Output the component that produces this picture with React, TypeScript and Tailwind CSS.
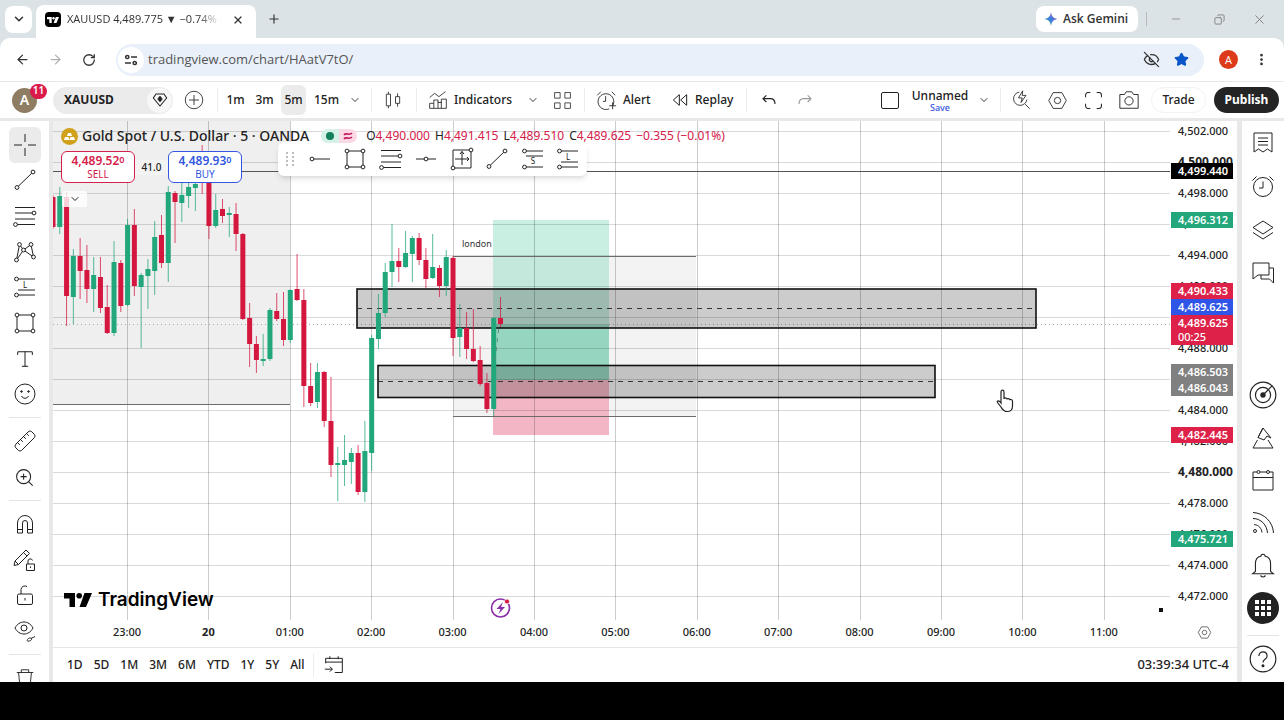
import React, { useState } from 'react';
import {
  ArrowLeft, ArrowRight, ChevronDown, Copy, EyeOff, Minus, MoreVertical, Plus, RotateCw, Ruler, Star, Type, X, ZoomIn,
} from 'lucide-react';

const UP = '#22a67b';
const DOWN = '#d4173f';

// [open, close, high, low] as plot y values, one entry for each 5 minute bar
const candles: number[][] = [
  [197, 227, 195, 229], [227, 196, 187, 234], [197, 296, 192, 326], [297, 256, 249, 324], [256, 271, 238, 299],
  [270, 289, 245, 303], [289, 275, 257, 312], [277, 308, 257, 313], [307, 333, 285, 334], [333, 262, 241, 336],
  [263, 306, 260, 312], [305, 225, 219, 306], [225, 286, 209, 296], [287, 275, 273, 348], [276, 269, 259, 309],
  [271, 237, 221, 295], [235, 263, 215, 268], [263, 192, 186, 282], [193, 202, 191, 243], [203, 195, 183, 222],
  [196, 187, 183, 208], [188, 184, 178, 211], [160, 180, 145, 194], [180, 226, 176, 239], [226, 210, 194, 228],
  [209, 216, 199, 223], [215, 213, 207, 237], [214, 234, 203, 251], [234, 319, 233, 320], [318, 344, 303, 367],
  [344, 360, 336, 373], [361, 359, 334, 366], [359, 310, 308, 361], [311, 319, 293, 321], [319, 340, 292, 346],
  [340, 290, 289, 343], [289, 300, 254, 301], [300, 386, 289, 407], [386, 403, 363, 406], [402, 372, 363, 408],
  [372, 421, 371, 427], [421, 465, 377, 477], [465, 463, 447, 501], [465, 460, 435, 486], [462, 453, 448, 484],
  [453, 492, 445, 495], [492, 451, 421, 502], [453, 338, 335, 471], [339, 313, 294, 349], [313, 272, 263, 317],
  [272, 261, 224, 287], [261, 267, 248, 282], [267, 253, 231, 268], [254, 238, 236, 282], [238, 260, 233, 265],
  [260, 279, 248, 288], [278, 267, 234, 279], [268, 286, 265, 297], [286, 257, 250, 296], [258, 338, 256, 356],
  [337, 328, 304, 357], [328, 349, 312, 359], [349, 361, 309, 362], [360, 384, 346, 386], [383, 409, 373, 413],
  [409, 318, 317, 416], [318, 324, 297, 327],
];

const hours = ['23:00', '20', '01:00', '02:00', '03:00', '04:00', '05:00', '06:00', '07:00', '08:00', '09:00', '10:00', '11:00'];
const prices = Array.from({ length: 16 }, (_, i) => 4502 - i * 2);

const tags = [
  { text: '4,499.440', y: 171, tone: 'bg-black' },
  { text: '4,496.312', y: 220, tone: 'bg-[#22a67b]' },
  { text: '4,490.433', y: 291, tone: 'bg-[#dd2148]' },
  { text: '4,489.625', y: 307, tone: 'bg-[#2f55e8]' },
  { text: '4,486.503', y: 372, tone: 'bg-[#808080]' },
  { text: '4,486.043', y: 388, tone: 'bg-[#808080]' },
  { text: '4,482.445', y: 435, tone: 'bg-[#dd2148]' },
  { text: '4,475.721', y: 539, tone: 'bg-[#22a67b]' },
];

const CHART_TOP = 121;

type IconProps = { children: React.ReactNode; size?: number; className?: string };

const Icon: React.FC<IconProps> = ({ children, size = 24, className }) => (
  <svg width={size} height={size} viewBox="0 0 24 24" fill="none" stroke="currentColor" strokeWidth="1" className={className}>
    {children}
  </svg>
);

const Dot = ({ x, y }: { x: number; y: number }) => <circle cx={x} cy={y} r="1.9" fill="#fff" />;

const TrendIcon = () => <Icon><path d="M4 19.5 20 4" /><Dot x={4} y={19.5} /><Dot x={20} y={4} /></Icon>;
const FibIcon = () => (
  <Icon>
    <path d="M2 3.5h20M2 9h18M2 15h20M2 20.5h20" /><Dot x={21} y={9} /><Dot x={2.5} y={20.5} />
  </Icon>
);
const RectIcon = () => (
  <Icon><path d="M4 4h16v16H4z" /><Dot x={4} y={4} /><Dot x={20} y={4} /><Dot x={4} y={20} /><Dot x={20} y={20} /></Icon>
);
const PositionIcon = ({ letter }: { letter: string }) => (
  <Icon>
    <path d={letter === 'S' ? 'M3 4h19M5 9h17M3 20h19' : 'M3 4h19M5 15h17M3 20h19'} />
    <Dot x={3.5} y={4} /><Dot x={3.5} y={20} />
    <text x="12" y={letter === 'S' ? 17 : 12.5} fontSize="8" textAnchor="middle" fill="currentColor" stroke="none">{letter}</text>
  </Icon>
);
const SettingsHex = ({ size = 24 }: { size?: number }) => (
  <Icon size={size}><path d="M7 3h10l5 9-5 9H7l-5-9z" /><circle cx="12" cy="12" r="3.6" /></Icon>
);

const railTools = [
  { label: 'Cross', icon: <Icon><path d="M1 12h8M15 12h8M12 1v8M12 15v8" /></Icon> },
  { label: 'Trend line', icon: <TrendIcon /> },
  { label: 'Fib retracement', icon: <FibIcon /> },
  {
    label: 'Patterns',
    icon: (
      <Icon>
        <path d="M3.5 20 6.5 4.5 10.5 10 18 4.5 20.5 17 10.5 10z" />
        <Dot x={3.5} y={20} /><Dot x={6.5} y={4.5} /><Dot x={18} y={4.5} /><Dot x={20.5} y={17} /><Dot x={10.5} y={10} />
      </Icon>
    ),
  },
  { label: 'Long position', icon: <PositionIcon letter="L" /> },
  { label: 'Rectangle', icon: <RectIcon /> },
  { label: 'Text', icon: <Type size={22} strokeWidth={1.1} /> },
  {
    label: 'Emoji',
    icon: (
      <Icon>
        <circle cx="12" cy="12" r="10" /><path d="M8.5 14c1.5 3 5.5 3 7 0" />
        <circle cx="8.5" cy="9.5" r=".8" fill="currentColor" /><circle cx="15.5" cy="9.5" r=".8" fill="currentColor" />
      </Icon>
    ),
  },
];

const lockTools = [
  {
    label: 'Magnet',
    icon: <Icon><path d="M4.5 21V11a7.5 7.5 0 0 1 15 0v10h-5V11a2.5 2.5 0 0 0-5 0v10zM4.5 17.5h5M14.5 17.5h5" /></Icon>,
  },
  {
    label: 'Stay in drawing mode',
    icon: (
      <Icon>
        <path d="M2 13 13 2l3.500 3.500-11 11-4.500 1zM10.5 4.500 14 8M2 13l3.500 3.500M13.500 16h8v6.500h-8zM15 16v-3a2.300 2.300 0 0 1 4.500-.5M17.500 18.500V20" />
      </Icon>
    ),
  },
  {
    label: 'Lock drawings',
    icon: <Icon><rect x="4.5" y="11" width="15" height="10.5" rx="1.5" /><path d="M8 11V6.5a4 4 0 0 1 6-3M12 15v2.500" /></Icon>,
  },
  {
    label: 'Hide drawings',
    icon: (
      <Icon>
        <path d="M2 9c4-8 14-8 18 0-4 8-14 8-18 0zM14 21.5c1-3 4-3 4.5-1.5s-3.5 3-4.5 1.5zM18 19.5l4-2" />
        <circle cx="11" cy="9" r="3" />
      </Icon>
    ),
  },
];

const panelTools = [
  { label: 'Watchlist', icon: <Icon><path d="M3 2h18v19l-4.5-3-4.500 3-4.500-3L3 21zM7 7h10M7 10.500h10M7 14h10" /></Icon> },
  { label: 'Alerts', icon: <Icon><circle cx="12" cy="13" r="9.5" /><path d="M12 7.5V14H8M1.500 6.500l4-4M22.500 6.500l-4-4" /></Icon> },
  { label: 'Object tree', icon: <Icon><path d="M12 3 22 9.5 12 16 2 9.500zM2 14.500 12 21l10-6.500" /></Icon> },
  { label: 'Chats', icon: <Icon><path d="M2 2h16v12H7l-5 4zM18 7h4.5v15l-4-4H10v-4" /></Icon> },
];

const widgetTools = [
  {
    label: 'Screeners',
    icon: (
      <Icon size={28}>
        <circle cx="12" cy="12" r="11" /><circle cx="12" cy="12" r="6.5" /><circle cx="12" cy="12" r="1.8" fill="currentColor" /><path d="m12 12 8-8" />
      </Icon>
    ),
  },
  { label: 'Pine', icon: <Icon><path d="M12 2 20 12l-4-2-3 4-6-2.5zM6.5 14 2 22h20l-5-8M7 11.500 12 2" /></Icon> },
  {
    label: 'Calendars',
    icon: (
      <Icon>
        <path d="M6 4H2v18h20V4h-3.500M9 4h6.500M2 9.500h20" /><circle cx="7.5" cy="4" r="1.5" /><circle cx="17" cy="4" r="1.5" />
      </Icon>
    ),
  },
  { label: 'News', icon: <Icon><circle cx="4" cy="20" r="1.5" /><path d="M2 1.5C13 2 22 11 22.5 22M2 7.5c8 0 14 6.500 14.500 14.500M3 13.500c5 .5 7.500 4 8 8" /></Icon> },
  { label: 'Notifications', icon: <Icon size={26}><path d="M5 18v-7c0-4 2-6.500 5-7a2 2 0 0 1 4 0c3 .5 5 3 5 7v7l2.500 2h-19zM10 21.500c0 2 4 2 4 0" /></Icon> },
];

const IconButton = ({ label, className = '', children }: { label: string; className?: string; children: React.ReactNode }) => (
  <button type="button" aria-label={label} className={`flex items-center justify-center shrink-0 ${className}`}>
    {children}
  </button>
);

const Divider = ({ className = '' }: { className?: string }) => <span className={`w-px h-6 bg-[#ededed] shrink-0 ${className}`} />;

const TvMark = ({ className }: { className: string }) => (
  <svg viewBox="0 0 28 14" fill="currentColor" className={className}>
    <path d="M0 0h11v14H5.500V5.500H0zM20.500 0H28l-6 14h-6.500z" />
    <circle cx="15.2" cy="2.8" r="2.8" />
  </svg>
);

const BrowserTop: React.FC = () => (
  <header className="shrink-0 bg-[#dce3e6] font-['Open_Sans',sans-serif] text-[#333]">
    <div className="h-[38px] flex items-center">
      <button type="button" aria-label="Search tabs" className="ml-[5px] w-[27px] h-[27px] rounded-lg bg-white flex items-center justify-center">
        <ChevronDown size={14} strokeWidth={2.6} />
      </button>
      <div className="ml-1 w-[220px] h-[33px] self-end rounded-t-lg bg-white flex items-center pl-[9px] pr-2 pb-1">
        <span className="w-4 h-[15px] rounded-sm bg-black text-white flex items-center justify-center shrink-0">
          <TvMark className="w-3 h-[6px]" />
        </span>
        <span className="ml-[6px] w-[157px] overflow-hidden whitespace-nowrap text-[11px] mask-r-from-85%">XAUUSD 4,489.775 ▼ −0.74% U</span>
        <IconButton label="Close tab" className="w-5 h-5 ml-[7px]"><X size={12} strokeWidth={2.4} /></IconButton>
      </div>
      <IconButton label="New tab" className="ml-2 w-5 h-5"><Plus size={14} strokeWidth={2} /></IconButton>
      <button type="button" className="ml-auto w-[102px] h-[26px] rounded-lg bg-white flex items-center gap-[5px] pl-2 text-xs font-semibold whitespace-nowrap">
        <svg width="14" height="14" viewBox="0 0 14 14">
          <defs>
            <linearGradient id="spark" x1="0" y1="1" x2="1" y2="0">
              <stop offset="0" stopColor="#3fa45b" /><stop offset=".5" stopColor="#3b7de8" /><stop offset="1" stopColor="#d8506b" />
            </linearGradient>
          </defs>
          <path d="M7 0c.6 4.500 2.500 6.400 7 7-4.500.6-6.400 2.500-7 7-.6-4.500-2.500-6.400-7-7 4.500-.6 6.400-2.500 7-7z" fill="url(#spark)" />
        </svg>
        Ask Gemini
      </button>
      <span className="w-px h-3.5 bg-[#b4babd] ml-2" />
      <div className="flex text-[#777]">
        <IconButton label="Minimise" className="w-[58px] h-8"><Minus size={12} strokeWidth={1.4} /></IconButton>
        <IconButton label="Restore" className="w-[29px] h-8"><Copy size={11} strokeWidth={1.8} className="-scale-x-100" /></IconButton>
        <IconButton label="Close" className="w-[50px] h-8"><X size={15} strokeWidth={1.4} /></IconButton>
      </div>
    </div>
    <div className="h-[43px] rounded-t-[10px] bg-white flex items-center">
      <IconButton label="Back" className="w-11 h-8"><ArrowLeft size={15} strokeWidth={2} /></IconButton>
      <IconButton label="Forward" className="w-[22px] h-8 text-[#b0b0b0]"><ArrowRight size={15} strokeWidth={2} /></IconButton>
      <IconButton label="Reload" className="w-[46px] h-8"><RotateCw size={14} strokeWidth={2.2} /></IconButton>
      <div className="ml-1 flex-1 h-8 rounded-full bg-[#e9f0fa] flex items-center pr-[15px]">
        <span className="ml-[2px] w-[26px] h-[26px] rounded-full bg-white flex items-center justify-center">
          <svg width="12" height="12" viewBox="0 0 12 12" fill="none" stroke="currentColor" strokeWidth="1.5">
            <circle cx="2.3" cy="3" r="1.6" /><path d="M6 3h6M0 9h6" /><circle cx="9.7" cy="9" r="1.6" />
          </svg>
        </span>
        <input
          aria-label="Address"
          defaultValue="tradingview.com/chart/HAatV7tO/"
          className="ml-1 flex-1 bg-transparent text-[13px] text-[#555] outline-none"
        />
        <EyeOff size={17} strokeWidth={1.8} />
        <Star size={15} className="ml-[14px] text-[#0b57c9]" fill="currentColor" />
      </div>
      <button type="button" aria-label="Profile" className="ml-[15px] w-[19px] h-[19px] rounded-full bg-[#dd3a1c] text-white text-[11px] leading-none">A</button>
      <IconButton label="Menu" className="w-[46px] h-8"><MoreVertical size={15} strokeWidth={2.4} /></IconButton>
    </div>
  </header>
);

const ChartToolbar: React.FC = () => {
  const [timeframe, setTimeframe] = useState('5m');

  return (
    <div className="h-9 mt-px shrink-0 bg-white flex items-center text-xs font-medium whitespace-nowrap">
      <div className="relative w-[41px] mr-3 pl-3">
        <span className="w-[25px] h-[25px] rounded-full bg-[#8f7d63] text-white text-sm font-semibold flex items-center justify-center">A</span>
        <span className="absolute left-[30px] -top-1 w-[17px] h-[15px] rounded-full bg-[#d91a4a] text-white text-[10px] font-semibold flex items-center justify-center">11</span>
      </div>
      <div className="w-[120px] h-[27px] rounded-full bg-[#ebebeb] flex items-center justify-between pl-[11px] font-bold">
        XAUUSD
        <span className="w-[25px] h-[25px] mr-px rounded-full bg-[#f7f7f7] flex items-center justify-center">
          <Icon size={16}><path strokeWidth="1.6" d="M6 3h12l4 6-10 12L2 9z" /><path fill="currentColor" d="m12 6 3.500 4.500L12 15l-3.500-4.500z" /></Icon>
        </span>
      </div>
      <IconButton label="Compare" className="w-[42px] h-8"><Icon size={20}><circle cx="12" cy="12" r="10.5" /><path d="M12 6v12M6 12h12" /></Icon></IconButton>
      <Divider className="ml-0.5 mr-[3px]" />
      {['1m', '3m', '5m', '15m'].map((value) => (
        <button
          key={value}
          type="button"
          aria-pressed={timeframe === value}
          onClick={() => setTimeframe(value)}
          className={`h-[30px] rounded-md text-center ${value === '15m' ? 'w-[37px]' : 'w-[25px] mx-0.5'} ${timeframe === value ? 'bg-[#ebebeb]' : ''}`}
        >
          {value}
        </button>
      ))}
      <IconButton label="Intervals" className="w-5 h-8"><ChevronDown size={12} strokeWidth={1.8} /></IconButton>
      <Divider className="ml-1.5" />
      <IconButton label="Candles" className="w-[42px] h-8">
        <Icon size={20}><path d="M4 5h5v14H4zM6.500 2v3M6.500 19v3M15 8h5v8h-5zM17.500 4v4M17.500 16v4" /></Icon>
      </IconButton>
      <Divider className="ml-0.5" />
      <button type="button" className="ml-[11px] w-[95px] h-8 flex items-center gap-1.5">
        <Icon size={20}><path d="M2 22v-6h5v-4h5v3h4v-4h6v11zM7 16v6M12 14v8M16 14v8M2 9l6-5 5 4 8-6" /></Icon>
        Indicators
      </button>
      <IconButton label="Favourite indicators" className="w-5 h-8"><ChevronDown size={12} strokeWidth={1.8} /></IconButton>
      <IconButton label="Templates" className="w-[38px] h-8">
        <Icon size={19}><path d="M2 2h7v7H2zM15 2h7v7h-7zM2 15h7v7H2zM15 15h7v7h-7z" /></Icon>
      </IconButton>
      <Divider className="ml-[3px]" />
      <button type="button" className="ml-[11px] w-[58px] h-8 flex items-center gap-1.5">
        <Icon size={21}><path d="M19 18a9 9 0 1 0-4 3.500M11 7v6H8M1.500 6l4-4M22 6l-4-4M15 18h8M19 14v8" /></Icon>
        Alert
      </button>
      <button type="button" className="ml-[18px] w-[68px] h-8 flex items-center gap-[7px]">
        <Icon size={16}><path strokeWidth="1.5" d="M11 4v16L2 12zM22 4v16l-9-8z" /></Icon>
        Replay
      </button>
      <Divider className="ml-1.5" />
      <IconButton label="Undo" className="w-[44px] h-8"><Icon size={16}><path strokeWidth="1.7" d="M8 5 3 10l5 5M3 10h11c5 0 7 3 7 8" /></Icon></IconButton>
      <IconButton label="Redo" className="w-[28px] h-8 text-[#999]"><Icon size={16}><path strokeWidth="1.7" d="m16 5 5 5-5 5M21 10H10c-5 0-7 3-7 8" /></Icon></IconButton>

      <div className="ml-auto flex items-center">
        <IconButton label="Layout" className="w-9 h-8"><span className="w-[18px] h-[17px] border border-[#222] rounded-xs" /></IconButton>
        <button type="button" className="ml-0.5 w-[60px] flex flex-col items-center leading-[14px]">
          <span>Unnamed</span>
          <span className="text-[9px] leading-[9px] text-[#3357e0]">Save</span>
        </button>
        <IconButton label="Manage layouts" className="w-7 h-8"><ChevronDown size={12} strokeWidth={1.8} /></IconButton>
        <Divider className="ml-0.5 mr-0.5" />
        <IconButton label="Quick search" className="w-9 h-8">
          <Icon size={20}><path d="M10 2.500a8 8 0 1 0 9 9M17 17l5.500 5.500M14 1 9 9.500h4.500L12 15l6-8.500h-4.500z" /></Icon>
        </IconButton>
        <IconButton label="Settings" className="w-9 h-8"><SettingsHex size={21} /></IconButton>
        <IconButton label="Fullscreen" className="w-9 h-8">
          <Icon size={19}><path strokeWidth="1.3" d="M2 8V5a3 3 0 0 1 3-3h3M16 2h3a3 3 0 0 1 3 3v3M22 16v3a3 3 0 0 1-3 3h-3M8 22H5a3 3 0 0 1-3-3v-3" /></Icon>
        </IconButton>
        <IconButton label="Snapshot" className="w-[35px] h-8">
          <Icon size={22}><path d="M2 6h5l2-3h6l2 3h5v15H2z" /><circle cx="12" cy="13" r="4.5" /></Icon>
        </IconButton>
        <button type="button" className="ml-[5px] w-[55px] h-[26px] rounded-full border border-[#f2f2f2]">Trade</button>
        <button type="button" className="ml-2 mr-[5px] w-[65px] h-[26px] rounded-full bg-[#242424] text-white font-bold">Publish</button>
      </div>
    </div>
  );
};

const DrawingRail: React.FC = () => (
  <nav aria-label="Drawing tools" className="w-[49px] shrink-0 bg-white overflow-hidden flex flex-col items-center pt-1.5">
    <div className="h-[285px] shrink-0 flex flex-col">
      {railTools.map((tool, i) => (
        <IconButton key={tool.label} label={tool.label} className={`w-8 flex-1 rounded-md ${i === 0 ? 'bg-[#ebebeb]' : ''}`}>{tool.icon}</IconButton>
      ))}
    </div>
    <span className="w-8 h-px my-[5px] bg-[#e4e4e4] shrink-0" />
    <IconButton label="Measure" className="w-8 h-9"><Ruler size={24} strokeWidth={1} className="-scale-x-100" /></IconButton>
    <IconButton label="Zoom in" className="w-8 h-9"><ZoomIn size={21} strokeWidth={1.2} /></IconButton>
    <span className="w-8 h-px my-[5px] bg-[#e4e4e4] shrink-0" />
    <div className="h-[143px] shrink-0 flex flex-col">
      {lockTools.map((tool) => (
        <IconButton key={tool.label} label={tool.label} className="w-8 flex-1">{tool.icon}</IconButton>
      ))}
    </div>
    <span className="w-8 h-px my-[5px] bg-[#e4e4e4] shrink-0" />
    <IconButton label="Remove" className="w-8 h-9"><Icon size={22}><path d="M3 6h18M8 6V3h8v3M5 6l1.500 16h11L19 6" /></Icon></IconButton>
  </nav>
);

const PanelRail: React.FC = () => (
  <nav aria-label="Panels" className="w-[42px] shrink-0 bg-white overflow-hidden flex flex-col items-center">
    <div className="h-[174px] shrink-0 flex flex-col">
      {panelTools.map((tool) => (
        <IconButton key={tool.label} label={tool.label} className="w-8 flex-1">{tool.icon}</IconButton>
      ))}
    </div>
    <div className="mt-auto h-[255px] shrink-0 flex flex-col">
      {widgetTools.map((tool) => (
        <IconButton key={tool.label} label={tool.label} className="w-8 flex-1">{tool.icon}</IconButton>
      ))}
      <IconButton label="Products" className="w-8 flex-1">
        <svg width="32" height="32" viewBox="0 0 32 32">
          <circle cx="16" cy="16" r="16" fill="#222" />
          <path fill="#fff" d="M8 8h4v4H8zM14 8h4v4h-4zM20 8h4v4h-4zM8 14h4v4H8zM14 14h4v4h-4zM20 14h4v4h-4zM8 20h4v4H8zM14 20h4v4h-4zM20 20h4v4h-4z" />
        </svg>
      </IconButton>
    </div>
    <span className="w-8 h-px mt-1.5 bg-[#e4e4e4] shrink-0" />
    <IconButton label="Help" className="w-8 h-[46px]">
      <Icon size={28}><circle cx="12" cy="12" r="11" /><path d="M8.500 9.500c0-5 7-4.500 7 0 0 3-3.500 2.500-3.500 5.500" /><circle cx="12" cy="17.8" r=".8" fill="currentColor" /></Icon>
    </IconButton>
  </nav>
);

const Plot: React.FC = () => (
  <svg viewBox="53 121 1117 526" preserveAspectRatio="xMinYMin slice" className="w-full h-full block">
    {/* session ranges */}
    <rect x="53" y="121" width="237" height="284" fill="#efefef" />
    <rect x="453" y="256" width="243" height="161" fill="#f3f3f3" />

    {/* long position */}
    <rect x="493" y="220" width="116" height="36" fill="#c9efe2" />
    <rect x="493" y="256" width="116" height="124" fill="#c4e9dc" />
    <rect x="493" y="324" width="116" height="56" fill={UP} fillOpacity=".28" />
    <rect x="493" y="380" width="116" height="55" fill="#f3b6c4" />

    {/* grid */}
    <g stroke="#000" strokeOpacity=".15" shapeRendering="crispEdges">
      {prices.map((p, i) => <line key={p} x1="53" x2="1170" y1={131.5 + i * 31} y2={131.5 + i * 31} />)}
      {hours.map((h, i) => <line key={h} x1={127.5 + i * 81.4} x2={127.5 + i * 81.4} y1="121" y2="620" strokeOpacity=".2" />)}
    </g>
    <g stroke="#6b6b6b" shapeRendering="crispEdges">
      <path d="M53 404.5h237M453 256.5h243M453 416.5h243" />
      <path d="M53 171.5h1117" stroke="#555" />
      <path d="M53 324.5h1117" stroke="#aaa" strokeDasharray="1 3" />
    </g>

    {/* supply and demand zones */}
    <g fill="#000" fillOpacity=".2" stroke="#111" strokeWidth="1.6">
      <rect x="357" y="289" width="679" height="39" />
      <rect x="378" y="365.5" width="557" height="32" />
      <path d="M357 308.5h679M378 381.5h557" fill="none" stroke="#333" strokeWidth="1.2" strokeDasharray="5 5" />
    </g>

    {candles.map(([open, close, high, low], i) => {
      const x = 53 + i * 6.78;
      const color = close < open ? UP : DOWN;
      return (
        <g key={i} fill={color}>
          <rect x={x - 0.5} y={high} width="1" height={low - high} fillOpacity=".75" />
          <rect x={x - 2.5} y={Math.min(open, close)} width="5" height={Math.abs(open - close)} />
        </g>
      );
    })}
    <path d="M495 360l4-34" stroke="#5b8b7b" strokeDasharray="4 5" />

    <text x="462" y="247" fontSize="9" fill="#333">london</text>

    {/* news event marker */}
    <g>
      <circle cx="500.5" cy="608" r="9" fill="#fff" stroke="#8b2da8" strokeWidth="1.6" />
      <path d="m503 602-6.500 7h4l-2 5 6.500-7h-4z" fill="#8b2da8" />
      <circle cx="507" cy="601.5" r="2.5" fill="#d4173f" stroke="#fff" strokeWidth=".8" />
    </g>
    <rect x="1159" y="608" width="4" height="4" fill="#111" />

    <g fontSize="11" fill="#222" textAnchor="middle">
      {hours.map((h, i) => (
        <text key={h} x={127 + i * 81.4} y="636" fontWeight={h === '20' ? 700 : 500}>{h}</text>
      ))}
    </g>
  </svg>
);

const PriceAxis: React.FC = () => (
  <div className="relative w-[67px] shrink-0 overflow-hidden text-[11px] leading-4 font-medium text-[#222]">
    {prices.map((price, i) => (
      <span
        key={price}
        className={`absolute left-2 -translate-y-1/2 ${price % 20 === 0 ? 'text-xs font-bold' : ''}`}
        style={{ top: 131 + i * 31 - CHART_TOP }}
      >
        {price.toLocaleString('en-US')}.000
      </span>
    ))}
    {tags.map((tag) => (
      <span
        key={tag.text}
        className={`absolute left-px w-[62px] pl-[7px] text-white font-semibold -translate-y-1/2 ${tag.tone}`}
        style={{ top: tag.y - CHART_TOP }}
      >
        {tag.text}
      </span>
    ))}
    <div className="absolute left-px top-[194px] w-[62px] h-[30px] pl-[7px] bg-[#dd2148] text-white leading-[14px] pt-px">
      <div className="font-semibold">4,489.625</div>
      <div>00:25</div>
    </div>
    <button type="button" aria-label="Axis settings" className="absolute left-[27px] bottom-[7px]"><SettingsHex size={15} /></button>
  </div>
);

const quote = [['O', '4,490.000'], ['H', '4,491.415'], ['L', '4,489.510'], ['C', '4,489.625']];

const Legend: React.FC = () => (
  <>
    <div className="absolute left-2 top-[5px] flex items-center h-5 whitespace-nowrap text-[#222]">
      <svg width="17" height="17" viewBox="0 0 17 17">
        <circle cx="8.5" cy="8.5" r="8.5" fill="#d0a21c" />
        <path fill="#fff" d="M7 5h3l1 3H6zM4 9h3.500l1 3H3zM9.500 9H13l1 3H8.500z" />
      </svg>
      <h1 className="ml-1 text-sm font-medium">Gold Spot / U.S. Dollar · 5 · OANDA</h1>
      <span className="ml-3 w-9 h-3.5 rounded-full overflow-hidden flex text-[#c2185b]">
        <span className="flex-1 bg-[#d5f0e6] flex items-center justify-center"><i className="w-2 h-2 rounded-full bg-[#12805c]" /></span>
        <span className="flex-1 bg-[#fbd9e4] flex items-center justify-center">
          <svg width="10" height="8" viewBox="0 0 10 8" fill="none" stroke="currentColor" strokeWidth="1.5">
            <path d="M1 3c2-3 5 1 8-2M1 7c2-3 5 1 8-2" />
          </svg>
        </span>
      </span>
      <span className="ml-[9px] flex gap-[5px] text-xs">
        {quote.map(([key, value]) => (
          <span key={key}>{key}<span className="text-[#d4204a]">{value}</span></span>
        ))}
        <span className="text-[#d4204a]">−0.355 (−0.01%)</span>
      </span>
    </div>
    <div className="absolute left-2 top-[30px] flex items-center text-center">
      <button type="button" className="w-[74px] h-8 rounded-md border border-[#d4204a] bg-white text-[#d4204a] text-[10px] leading-3">
        <span className="block text-xs leading-[14px] font-semibold">4,489.52<sup className="text-[9px] -top-0.5">0</sup></span>
        SELL
      </button>
      <span className="w-[33px] text-[10px] font-medium bg-[#f3f3f3]">41.0</span>
      <button type="button" className="w-[74px] h-8 rounded-md border border-[#3357e0] bg-white text-[#3357e0] text-[10px] leading-3">
        <span className="block text-xs leading-[14px] font-semibold">4,489.93<sup className="text-[9px] -top-0.5">0</sup></span>
        BUY
      </button>
    </div>
    <button type="button" aria-label="Collapse legend" className="absolute left-[9px] top-[70px] w-[25px] h-4 rounded-xs bg-white/80 flex items-center justify-center">
      <ChevronDown size={12} strokeWidth={2} />
    </button>
  </>
);

const favourites = [
  { label: 'Horizontal ray', icon: <Icon><path d="M4 12h18" /><Dot x={4} y={12} /></Icon> },
  { label: 'Rectangle', icon: <RectIcon /> },
  { label: 'Fib retracement', icon: <FibIcon /> },
  { label: 'Horizontal line', icon: <Icon><path d="M2 12h20" /><Dot x={12} y={12} /></Icon> },
  {
    label: 'Price range',
    icon: <Icon><path d="M3 3h18v18H3zM12 4.500V18M5 12h14M10 7l2-2.500L14 7M17 10l2 2-2 2" /><Dot x={21} y={3} /><Dot x={3} y={21} /></Icon>,
  },
  { label: 'Trend line', icon: <TrendIcon /> },
  { label: 'Short position', icon: <PositionIcon letter="S" /> },
  { label: 'Long position', icon: <PositionIcon letter="L" /> },
];

const FavouritesBar: React.FC = () => (
  <div className="absolute left-[225px] top-[21px] w-[309px] h-[34px] rounded-md bg-white shadow-md flex items-center pr-px">
    <span className="w-6 shrink-0 flex justify-center text-[#bbb]">
      <svg width="8" height="14" viewBox="0 0 8 14" fill="currentColor">
        <path d="M0 0h2v2H0zM6 0h2v2H6zM0 4h2v2H0zM6 4h2v2H6zM0 8h2v2H0zM6 8h2v2H6zM0 12h2v2H0zM6 12h2v2H6z" />
      </svg>
    </span>
    {favourites.map((tool) => (
      <IconButton key={tool.label} label={tool.label} className="flex-1 h-8">{tool.icon}</IconButton>
    ))}
  </div>
);

const RangeBar: React.FC = () => (
  <footer className="h-[35px] shrink-0 border-t border-[#e6e6e6] flex items-center pl-[14px] pr-2 text-xs font-medium">
    <div className="flex gap-[11px]">
      {['1D', '5D', '1M', '3M', '6M', 'YTD', '1Y', '5Y', 'All'].map((range) => (
        <button key={range} type="button">{range}</button>
      ))}
    </div>
    <Divider className="ml-2" />
    <IconButton label="Go to date" className="ml-2 w-6 h-8">
      <Icon size={20}><path strokeWidth="1.2" d="M2 10V4h20v17h-9M2 8.500h20M7 1.500V5M17 1.500V5M1 17h9M7 14l3 3-3 3" /></Icon>
    </IconButton>
    <button type="button" className="ml-auto text-[13px]">03:39:34 UTC-4</button>
  </footer>
);

const App: React.FC = () => (
  <div className="h-screen min-h-[720px] flex flex-col bg-[#e8e8e8] font-['Noto_Sans','Open_Sans',sans-serif] text-[#222]">
    <BrowserTop />
    <ChartToolbar />
    <div className="flex-1 min-h-0 mt-[3px] flex">
      <DrawingRail />
      <main className="flex-1 min-w-0 ml-1 mr-[5px] bg-white flex flex-col">
        <div className="relative flex-1 min-h-0 flex">
          <div className="flex-1 min-w-0"><Plot /></div>
          <PriceAxis />
          <FavouritesBar />
          <Legend />
          <div className="absolute left-[11px] bottom-[35px] flex items-center gap-[6px] text-black">
            <TvMark className="w-7 h-[14px]" />
            <span className="font-['Inter',sans-serif] text-[19px] leading-6 font-semibold">TradingView</span>
          </div>
          <svg width="18" height="24" viewBox="0 0 18 24" className="absolute left-[943px] top-[268px]" fill="#fff" stroke="#222" strokeWidth="1.2">
            <path d="M5 14V3c0-2.500 3-2.500 3 0v7c0-1.500 3-1.500 3 .5 0-1.500 2.800-1.200 2.800.7 0-1.200 2.700-1 2.700 1v5c0 3-2 5.300-5 5.300-4 0-5-2-6.500-4.500L1.500 13.500c-1-2 1.500-2.500 3.500.5z" />
          </svg>
        </div>
        <RangeBar />
      </main>
      <PanelRail />
    </div>
    <div className="h-[38px] shrink-0 bg-black" />
  </div>
);

export default App;
